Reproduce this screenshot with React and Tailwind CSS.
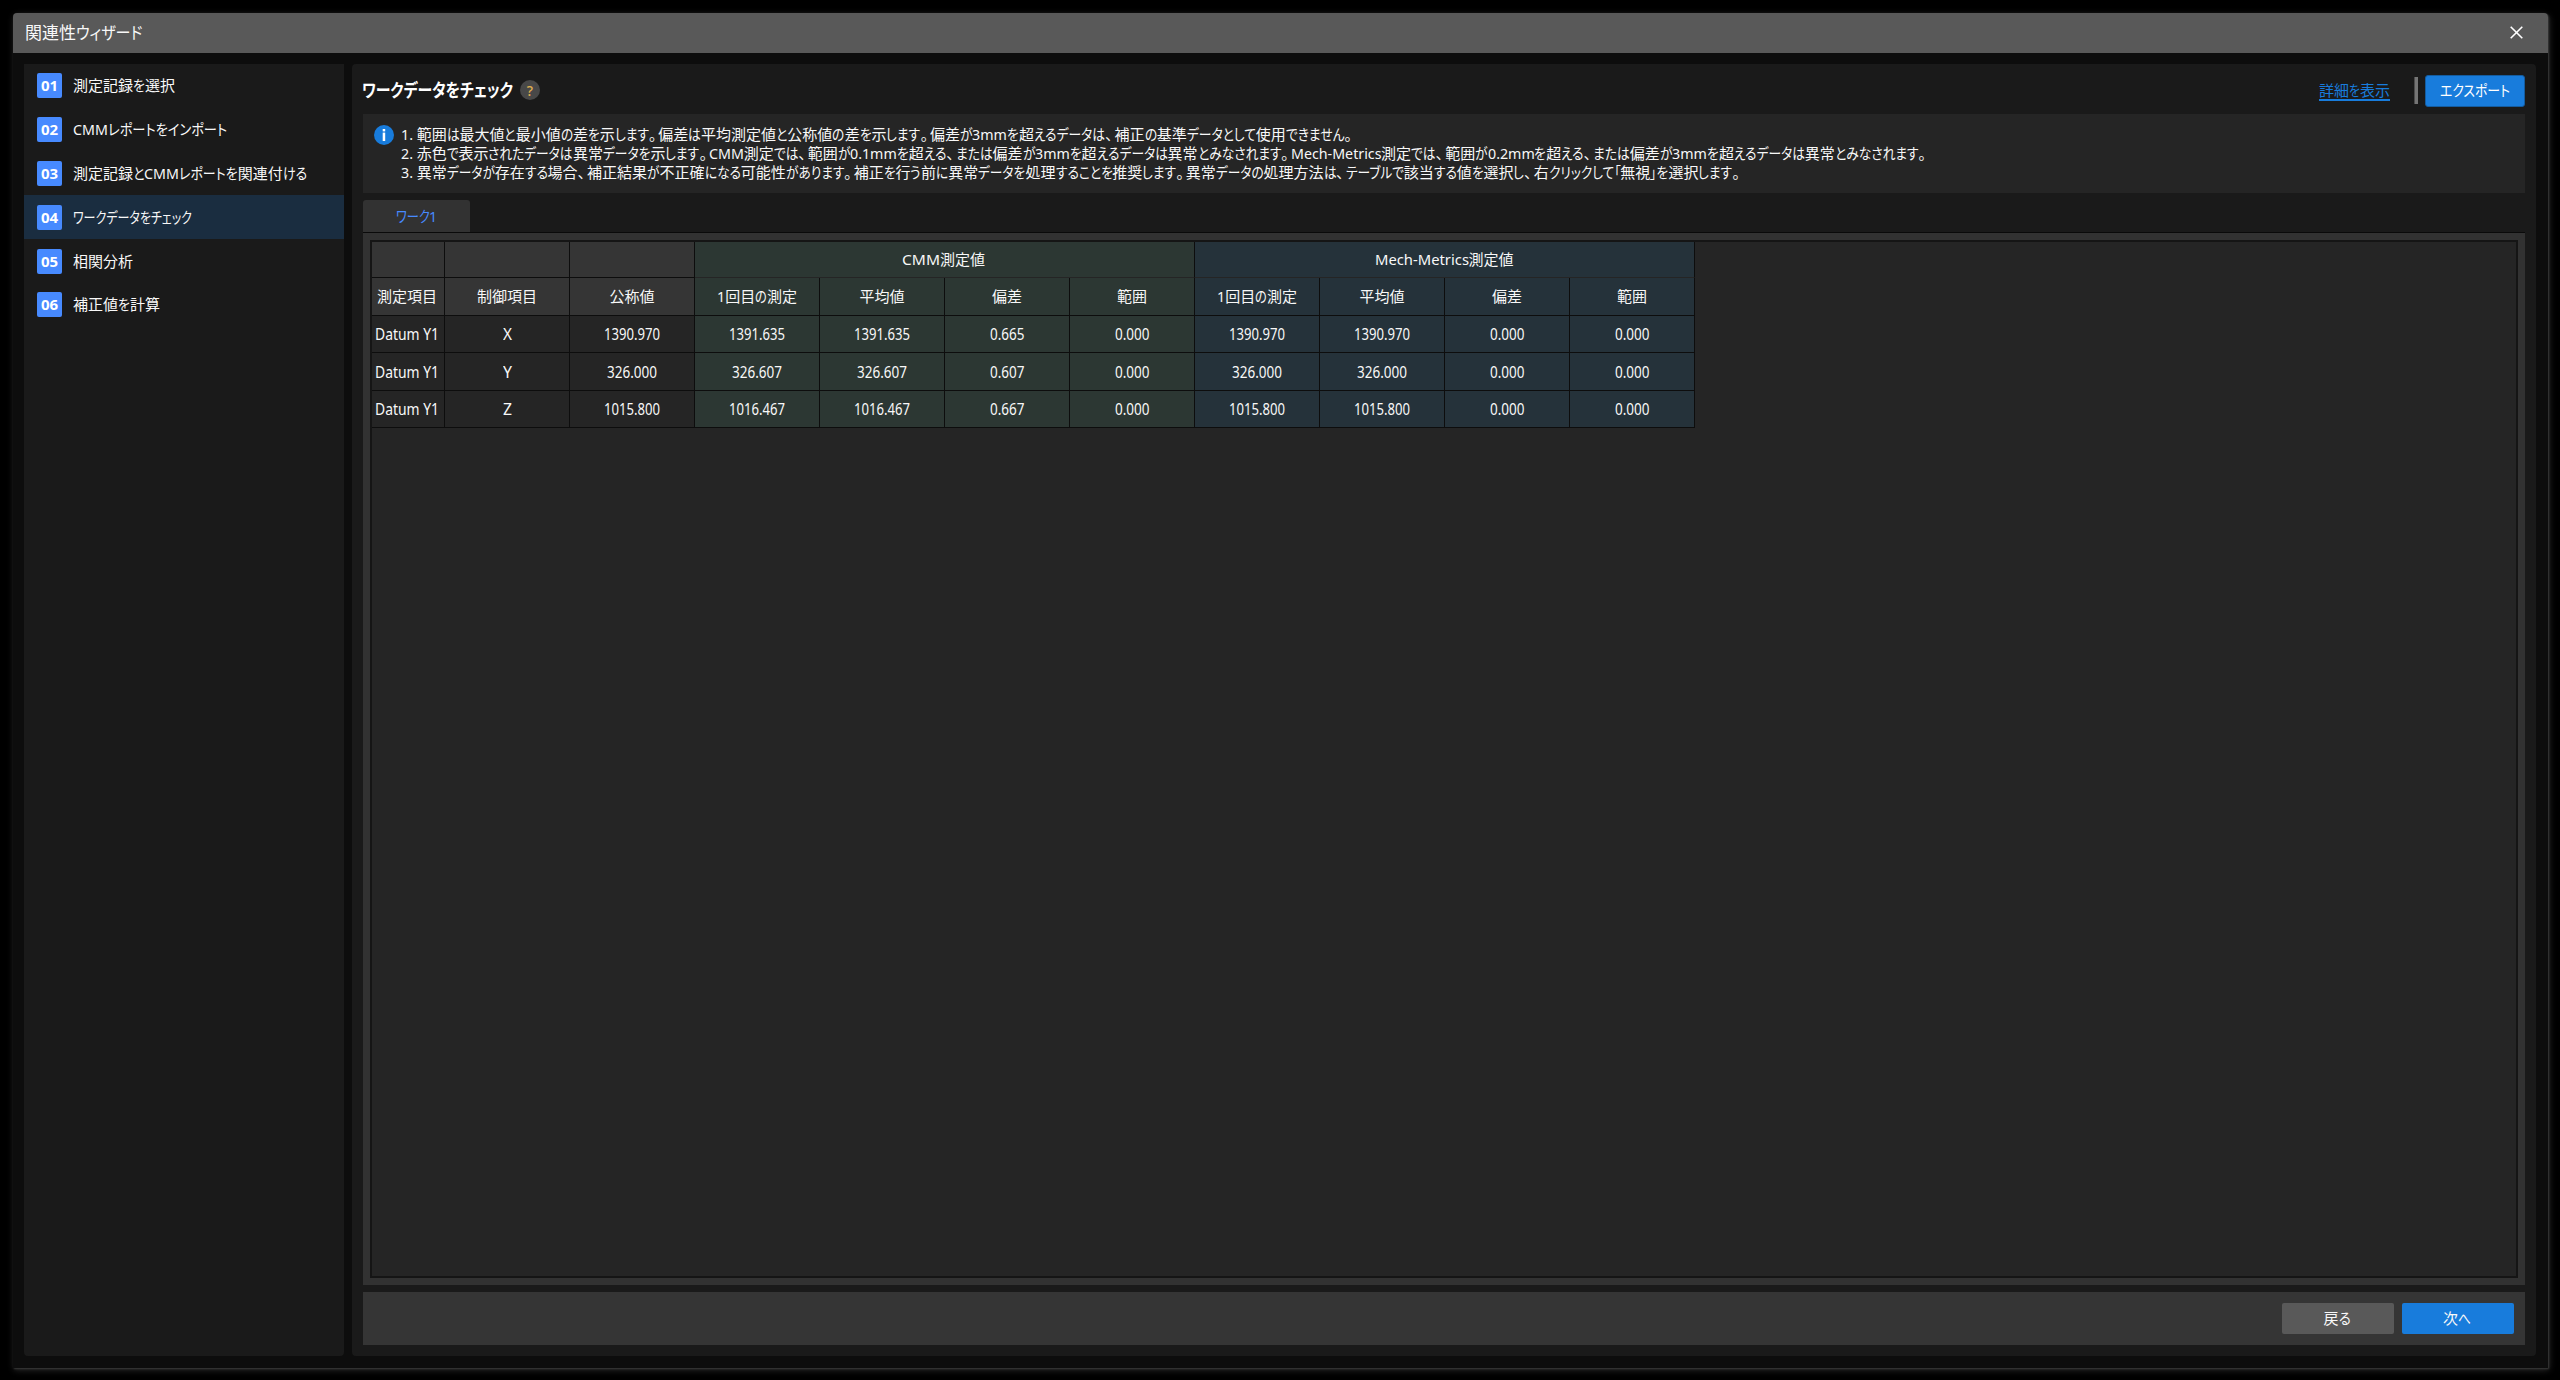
import React, { useLayoutEffect, useRef, useState } from "react";

const PUNCT = /([\u3001\u3002])/;
const KANA = /([\u3040-\u30ff\u300c\u300d]+)/;
const HAN = /([\u3400-\u9fff]+)/;
const PUNCT_WIDTH = 9.5;

function kindOf(s) {
  if (PUNCT.test(s)) return "punct";
  if (KANA.test(s)) return "kana";
  if (HAN.test(s)) return "han";
  return "latin";
}

// Sets a line of mixed text to a given width by condensing its kana
// (or, where it has none, its Latin letters and digits).
function T({ w, children, className = "" }) {
  const ref = useRef(null);
  const [fit, setFit] = useState(null);
  const parts = children
    .split(PUNCT)
    .flatMap((s) => (PUNCT.test(s) ? [s] : s.split(KANA)))
    .flatMap((s) => (PUNCT.test(s) || KANA.test(s) ? [s] : s.split(HAN)))
    .filter(Boolean);
  const kinds = parts.map(kindOf);
  const target = kinds.includes("kana") ? "kana" : "latin";

  useLayoutEffect(() => {
    const widths = [...ref.current.children].map((e) => e.firstChild.getBoundingClientRect().width);
    let free = 0;
    let fixed = 0;
    const base = kinds.map((k) => (k === "latin" && target === "kana" ? 0.95 : 1));
    widths.forEach((x, i) => {
      if (kinds[i] === target) free += x;
      else if (kinds[i] === "punct") fixed += PUNCT_WIDTH;
      else fixed += x * base[i];
    });
    const s = free > 0 ? (w - fixed) / free : 1;
    setFit(
      widths.map((x, i) => {
        if (kinds[i] === "punct") return { w: PUNCT_WIDTH, s: 1 };
        const k = kinds[i] === target ? s : base[i];
        return { w: x * k, s: k };
      })
    );
  }, [w, children]);

  return (
    <span ref={ref} className={"inline-block whitespace-pre text-left " + className}>
      {parts.map((p, i) => (
        <span key={i} className="inline-block" style={fit ? { width: fit[i].w } : undefined}>
          <span
            className="inline-block origin-left"
            style={fit ? { transform: `scaleX(${fit[i].s})` } : undefined}
          >
            {p}
          </span>
        </span>
      ))}
    </span>
  );
}

const STEPS = [
  ["01", "測定記録を選択", 102],
  ["02", "CMMレポートをインポート", 154],
  ["03", "測定記録とCMMレポートを関連付ける", 234],
  ["04", "ワークデータをチェック", 119],
  ["05", "相関分析", 60],
  ["06", "補正値を計算", 87],
];

const NOTES = [
  ["1. 範囲は最大値と最小値の差を示します。偏差は平均測定値と公称値の差を示します。偏差が3mmを超えるデータは、補正の基準データとして使用できません。", 953],
  ["2. 赤色で表示されたデータは異常データを示します。CMM測定では、範囲が0.1mmを超える、または偏差が3mmを超えるデータは異常とみなされます。Mech-Metrics測定では、範囲が0.2mmを超える、または偏差が3mmを超えるデータは異常とみなされます。", 1527],
  ["3. 異常データが存在する場合、補正結果が不正確になる可能性があります。補正を行う前に異常データを処理することを推奨します。異常データの処理方法は、テーブルで該当する値を選択し、右クリックして「無視」を選択します。", 1341],
];

const HEADS = [
  ["測定項目", 60],
  ["制御項目", 60],
  ["公称値", 45],
  ["1回目の測定", 80],
  ["平均値", 45],
  ["偏差", 30],
  ["範囲", 30],
  ["1回目の測定", 80],
  ["平均値", 45],
  ["偏差", 30],
  ["範囲", 30],
];

const ROWS = [
  ["Datum Y1", "X", "1390.970", "1391.635", "1391.635", "0.665", "0.000", "1390.970", "1390.970", "0.000", "0.000"],
  ["Datum Y1", "Y", "326.000", "326.607", "326.607", "0.607", "0.000", "326.000", "326.000", "0.000", "0.000"],
  ["Datum Y1", "Z", "1015.800", "1016.467", "1016.467", "0.667", "0.000", "1015.800", "1015.800", "0.000", "0.000"],
];

const WIDTHS = { 8: 56, 7: 50, 5: 34.5, 1: 9 };
const COLS = "grid grid-cols-[73px_repeat(10,125px)]";
const CELL = "flex items-center justify-center border-r border-b border-[#0d0d0d] ";

function tint(i, header) {
  if (i > 6) return "bg-[#25323a]";
  if (i > 2) return "bg-[#2c3733]";
  return header ? "bg-[#353535]" : "bg-[#252525]";
}

function Table() {
  return (
    <div className="w-[1323px]">
      <div className="grid h-[36px] grid-cols-[73px_125px_125px_500px_500px]">
        {[0, 1, 2].map((i) => (
          <div key={i} className={CELL + "bg-[#353535]"} />
        ))}
        <div className="flex items-center justify-center border-r border-b border-r-[#0d0d0d] border-b-[#252525] bg-[#2c3733] pr-[2px]">
          <T w={83}>CMM測定値</T>
        </div>
        <div className="flex items-center justify-center border-r border-b border-r-[#0d0d0d] border-b-[#252525] bg-[#25323a] pr-[1px]">
          <T w={139}>Mech-Metrics測定値</T>
        </div>
      </div>
      <div className={COLS + " h-[38px]"}>
        {HEADS.map(([t, w], i) => (
          <div key={i} className={CELL + tint(i, true) + (i === 0 ? " pr-[2px]" : "")}>
            <T w={w}>{t}</T>
          </div>
        ))}
      </div>
      <div className="grid grid-rows-[37px_38px_37px]">
        {ROWS.map((row, r) => (
          <div key={r} className={COLS}>
            {row.map((v, i) => (
              <div
                key={i}
                className={
                  CELL + tint(i, false) + (r === 1 ? " pt-[1px]" : "") + (i === 0 ? " pr-[2px]" : "")
                }
              >
                <T w={i === 0 ? 64 : WIDTHS[v.length]} className="text-[15.5px]">
                  {v}
                </T>
              </div>
            ))}
          </div>
        ))}
      </div>
    </div>
  );
}

export default function App() {
  return (
    <div className="h-[1380px] w-[2560px] overflow-hidden bg-black pt-[13px] pl-[13px] font-['Noto_Sans','Noto_Sans_CJK_JP',sans-serif] text-[15px] leading-[19px] text-[#f8f8f8] [font-feature-settings:'palt']">
      <div className="flex h-[1355px] w-[2535px] flex-col rounded-t-[4px] bg-[#0d0d0d] shadow-[1px_1px_2px_#3a3a3a,1px_2px_7px_#2a2a2a]">
        <header className="flex h-10 shrink-0 items-center justify-between rounded-t-[4px] bg-[#595959] pr-[25px] pb-px pl-3 text-[17px]">
          <T w={117.5}>関連性ウィザード</T>
          <svg width="13" height="13" viewBox="0 0 13 13" stroke="#fff" strokeWidth="1.6">
            <path d="M.7.7l11.6 11.6M12.3.7L.7 12.3" />
          </svg>
        </header>

        <div className="flex min-h-0 flex-1 gap-2 px-[11px] pt-[11px] pb-[12px]">
          <nav className="w-[320px] shrink-0 rounded-b-[4px] bg-[#1a1a1a]">
            {STEPS.map(([n, t, w], i) => (
              <div
                key={n}
                className={
                  "flex h-[43.8px] items-center gap-[11px] pl-[13px] " + (i === 3 ? "bg-[#1a2d40]" : "")
                }
              >
                <div className="flex h-[25px] w-[25px] items-center justify-center rounded-[2px] bg-[#478aff] font-bold text-white">
                  {n}
                </div>
                <T w={w}>{t}</T>
              </div>
            ))}
          </nav>

          <main className="flex w-[2184px] shrink-0 flex-col rounded-[4px] bg-[#1a1a1a] px-[11px] pb-[11px]">
            <div className="flex h-[50px] shrink-0 items-center pt-[4px]">
              <T w={151} className="-mt-[2px] -ml-px text-[18px] font-bold text-white">
                ワークデータをチェック
              </T>
              <div className="-mt-[2px] ml-[7px] flex h-5 w-5 items-center justify-center rounded-full bg-[#484848] text-[14px] font-medium text-[#e0b050]">
                ?
              </div>
              <div className="ml-auto border-b-2 border-[#187cdc] leading-[17px] text-[#187cdc]">
                <T w={71}>詳細を表示</T>
              </div>
              <div className="-mt-px ml-6 h-[27px] w-[4px] border-l border-[#4c4c4c] bg-[#757575]" />
              <button className="-mt-px ml-[7px] h-8 w-[100px] rounded-[3px] border border-[#145c9f] bg-[#187cdc] text-white">
                <T w={70}>エクスポート</T>
              </button>
            </div>

            <div className="flex h-[79px] shrink-0 gap-[7px] bg-[#252525] pt-[11px] pl-[11px]">
              <div className="flex h-5 w-5 items-center justify-center rounded-full bg-[#187cdc]">
                <svg width="4" height="12" viewBox="0 0 4 12" fill="#fff">
                  <rect x=".7" y="0" width="2.5" height="2.4" />
                  <rect x=".7" y="3.6" width="2.5" height="8.4" />
                </svg>
              </div>
              <div className="flex flex-col">
                {NOTES.map(([t, w]) => (
                  <div key={w} className="h-[19px]">
                    <T w={w}>{t}</T>
                  </div>
                ))}
              </div>
            </div>

            <div className="mt-[7px] flex h-8 w-[107px] shrink-0 items-center justify-center rounded-t-[3px] bg-[#323232] text-[#478aff]">
              <T w={42}>ワーク1</T>
            </div>
            <div className="h-[1053px] shrink-0 border-t border-[#0a0a0a] bg-[#323232] p-[7px]">
              <div className="h-full border-2 border-[#151515] bg-[#252525]">
                <Table />
              </div>
            </div>

            <footer className="mt-[7px] flex h-[53px] shrink-0 items-center justify-end gap-2 bg-[#353535] pr-[11px]">
              <button className="h-[31px] w-[112px] rounded-[2px] bg-[#595959] pr-[2px]">
                <T w={27}>戻る</T>
              </button>
              <button className="h-[31px] w-[112px] rounded-[2px] bg-[#187cdc] pr-[2px]">
                <T w={28}>次へ</T>
              </button>
            </footer>
          </main>
        </div>
      </div>
    </div>
  );
}
